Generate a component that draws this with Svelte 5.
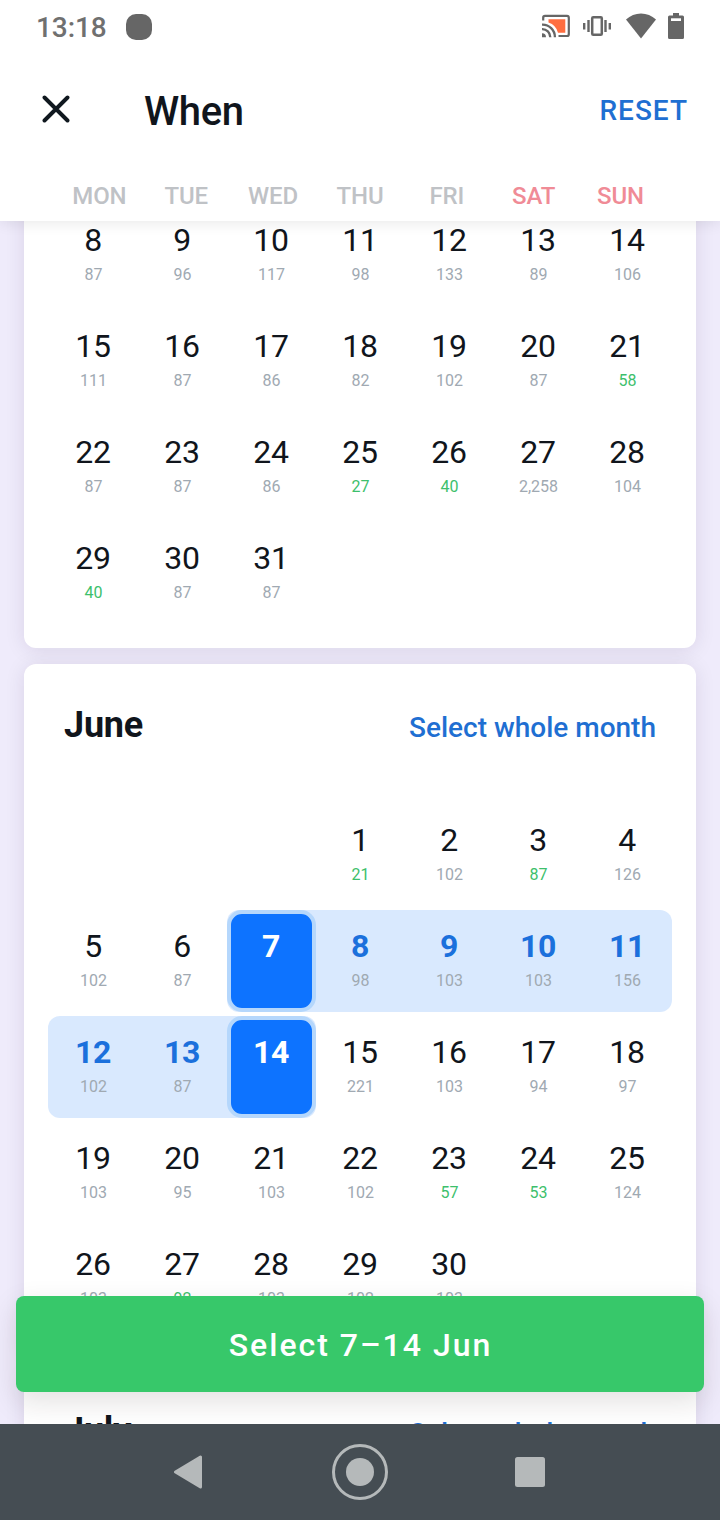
<script>
const weekdays = ['MON', 'TUE', 'WED', 'THU', 'FRI', 'SAT', 'SUN'];

// [day, price, is it cheap]
const mayDays = [
  [8, '87'], [9, '96'], [10, '117'], [11, '98'], [12, '133'], [13, '89'], [14, '106'],
  [15, '111'], [16, '87'], [17, '86'], [18, '82'], [19, '102'], [20, '87'], [21, '58', true],
  [22, '87'], [23, '87'], [24, '86'], [25, '27', true], [26, '40', true], [27, '2,258'], [28, '104'],
  [29, '40', true], [30, '87'], [31, '87'],
];

const juneDays = [
  [1, '21', true], [2, '102'], [3, '87', true], [4, '126'],
  [5, '102'], [6, '87'], [7, ''], [8, '98'], [9, '103'], [10, '103'], [11, '156'],
  [12, '102'], [13, '87'], [14, ''], [15, '221'], [16, '103'], [17, '94'], [18, '97'],
  [19, '103'], [20, '95'], [21, '103'], [22, '102'], [23, '57', true], [24, '53', true], [25, '124'],
  [26, '103'], [27, '92', true], [28, '103'], [29, '102'], [30, '103'],
];

const months = [
  { name: 'May', header: false, offset: 0, days: mayDays },
  { name: 'June', header: true, offset: 3, days: juneDays },
  { name: 'July', header: true, offset: 0, days: [] },
];

let from = $state(7);
let to = $state(14);

function inRange(month, day) {
  return month.name === 'June' && from !== null && day >= from && day <= to;
}

function isEdge(month, day) {
  return month.name === 'June' && (day === from || day === to);
}

function reset() {
  from = null;
  to = null;
}

function pick(month, day) {
  if (month.name !== 'June') return;
  if (from === null || from !== to) {
    from = day;
    to = day;
  } else if (day < from) {
    from = day;
  } else {
    to = day;
  }
}
</script>


<div class="screen">
  <header>
    <!-- --- Status bar --- -->
    <div class="status">
      <span class="clock">13:18</span>
      <span class="notification"></span>
      <div class="status-icons">
        <svg class="cast" viewBox="0 0 28 24" width="28" height="24">
          <path d="M6.500 5.300H23.300V18.700H16Q14 11 6.500 8.500Z" fill="#ff6e40" />
          <path d="M1.200 6.500V3.400Q1.200 1.900 3 1.900H25Q26.800 1.900 26.800 3.700V20.200Q26.800 22 25 22H16.500" fill="none" stroke="#666" stroke-width="2.200" />
          <path d="M0 10.600A12.400 12.400 0 0 1 12.900 23.200M0 15.200A8 8 0 0 1 8.300 23.200" fill="none" stroke="#666" stroke-width="2.300" />
          <path d="M0 19.200A4 4 0 0 1 4 23.200H0Z" fill="#666" />
        </svg>
        <svg class="vibrate" viewBox="0 0 28 22" width="28" height="22">
          <rect x="9.200" y="2.200" width="9.600" height="17.600" rx="1" fill="none" stroke="#666" stroke-width="2.500" />
          <path d="M5.500 5V17M22.500 5V17M1.200 8V14.500M26.800 8V14.500" stroke="#666" stroke-width="2.400" />
        </svg>
        <svg class="wifi" viewBox="0 0 30 26" width="30" height="26">
          <path d="M0 6.500Q6.500 .5 15 .5T30 6.500L15 25.500Z" fill="#666" />
        </svg>
        <svg class="battery" viewBox="0 0 16 26" width="16" height="26">
          <path d="M5 0H11V2.600H14.500Q16 2.600 16 4.100V24.500Q16 26 14.500 26H1.500Q0 26 0 24.500V4.100Q0 2.600 1.500 2.600H5Z" fill="#666" />
          <path d="M3 5.300H13V8H3Z" fill="#fff" />
        </svg>
      </div>
    </div>

    <div class="toolbar">
      <button class="close" aria-label="Close">
        <svg viewBox="0 0 28 28" width="28" height="28">
          <path d="M2.500 2.500L25.500 25.500M25.500 2.500L2.500 25.500" stroke="#10181f" stroke-width="3.900" stroke-linecap="round" />
        </svg>
      </button>
      <h1>When</h1>
      <button class="reset" onclick={reset}>RESET</button>
    </div>

    <div class="weekdays">
      {#each weekdays as name, i}
        <span class:weekend={i > 4}>{name}</span>
      {/each}
    </div>
  </header>

  <!-- --- Months --- -->
  <main>
    {#each months as month}
      <section class="month" class:scrolled={!month.header}>
        {#if month.header}
          <div class="month-header">
            <h2>{month.name}</h2>
            <button class="whole">Select whole month</button>
          </div>
        {/if}
        <div class="days">
          {#each Array(month.offset) as _}
            <span></span>
          {/each}
          {#each month.days as [day, price, cheap], i}
            <button
              class="day"
              class:range={inRange(month, day)}
              class:edge={isEdge(month, day)}
              class:round-left={day === from || (i + month.offset) % 7 === 0}
              class:round-right={day === to || (i + month.offset) % 7 === 6}
              onclick={() => pick(month, day)}
            >
              <span class="number">{day}</span>
              <span class="price" class:cheap>{price}</span>
            </button>
          {/each}
        </div>
      </section>
    {/each}
  </main>

  <button class="submit">Select {from}–{to} Jun</button>

  <!-- --- System navigation --- -->
  <nav>
    <svg viewBox="0 0 28 34" width="28" height="34">
      <path d="M26.500 2V32L1.500 17Z" fill="#b5b9ba" stroke="#b5b9ba" stroke-width="3" stroke-linejoin="round" />
    </svg>
    <svg class="home" viewBox="0 0 56 56" width="56" height="56">
      <circle cx="28" cy="28" r="26.500" fill="none" stroke="#b5b9ba" stroke-width="3" />
      <circle cx="28" cy="28" r="14" fill="#b5b9ba" />
    </svg>
    <svg viewBox="0 0 30 30" width="30" height="30">
      <rect width="30" height="30" rx="2.500" fill="#b5b9ba" />
    </svg>
  </nav>
</div>


<style>
  :global(body) {
    margin: 0;
  }

  .screen {
    position: relative;
    display: flex;
    flex-direction: column;
    width: 720px;
    height: 1520px;
    overflow: hidden;
    background: #efebfb;
    color: #10151c;
    font-family: Roboto, "Liberation Sans", sans-serif;
  }

  button {
    margin: 0;
    padding: 0;
    border: 0;
    background: none;
    color: inherit;
    font: inherit;
    cursor: pointer;
  }

  svg {
    display: block;
    flex: none;
  }

  header {
    z-index: 2;
    flex: none;
    display: flex;
    flex-direction: column;
    box-sizing: border-box;
    height: 221px;
    background: #fff;
    box-shadow: 0 2px 14px rgba(0, 0, 0, 0.09);
  }

  .status {
    display: flex;
    align-items: center;
    height: 54px;
    padding: 0 36px;
  }

  .clock {
    margin-top: 1px;
    color: #707070;
    font-size: 28px;
    font-weight: 500;
    letter-spacing: -0.1px;
    line-height: 54px;
  }

  .notification {
    width: 26px;
    height: 26px;
    margin-left: 19px;
    border-radius: 10px;
    background: #666;
  }

  .status-icons {
    display: flex;
    align-items: center;
    margin: -2px 0 0 auto;
  }

  .vibrate {
    margin-left: 13px;
  }

  .wifi {
    margin-left: 15px;
  }

  .battery {
    margin-left: 12px;
  }

  .toolbar {
    display: flex;
    align-items: center;
    height: 112px;
    padding: 0 32px 0 42px;
  }

  .close {
    margin-top: -2px;
  }

  h1 {
    margin: 3px 0 0 74px;
    font-size: 40px;
    font-weight: 500;
    letter-spacing: -0.4px;
    line-height: 48px;
  }

  .reset {
    margin-left: auto;
    color: #1f6fd2;
    font-size: 28px;
    font-weight: 500;
    letter-spacing: 1px;
  }

  .weekdays {
    display: grid;
    grid-template-columns: repeat(7, 1fr);
    padding: 16px 56px 0;
    color: #bfc2c6;
    font-size: 24px;
    font-weight: 500;
    letter-spacing: -0.1px;
    line-height: 28px;
    text-align: center;
  }

  .weekend {
    color: #f08b96;
  }

  main {
    flex: 1;
    min-height: 0;
    display: flex;
    flex-direction: column;
    gap: 16px;
    padding: 0 24px;
    overflow: hidden;
  }

  .month {
    flex: none;
    padding: 24px;
    border-radius: 12px;
    background: #fff;
    box-shadow: 0 2px 20px rgba(40, 20, 60, 0.1);
  }

  .scrolled {
    margin-top: -41px;
  }

  .month-header {
    display: flex;
    align-items: baseline;
    justify-content: space-between;
    height: 100px;
    margin-bottom: 16px;
    padding: 0 16px;
  }

  h2 {
    margin: 0;
    padding-top: 16px;
    font-size: 36px;
    font-weight: 700;
    letter-spacing: -0.2px;
    line-height: 42px;
  }

  .whole {
    color: #1f6fd2;
    font-size: 28px;
    font-weight: 500;
  }

  .days {
    display: grid;
    grid-template-columns: repeat(7, 89px);
    grid-auto-rows: 102px;
    row-gap: 4px;
    padding-left: 1px;
  }

  .day {
    position: relative;
    z-index: 0;
    display: flex;
    flex-direction: column;
    align-items: center;
    padding-top: 17px;
  }

  .number {
    padding-right: 1px;
    font-size: 32px;
    letter-spacing: -0.3px;
    line-height: 38px;
  }

  .price {
    margin-top: 6px;
    color: #a0a9b2;
    font-size: 16px;
    line-height: 20px;
  }

  .cheap {
    color: #3dbf6c;
  }

  .range {
    background: #d9e9fe;
    color: #1b70dc;
  }

  .range .number {
    font-weight: 700;
  }

  .range.round-left {
    border-radius: 12px 0 0 12px;
  }

  .range.round-right {
    border-radius: 0 12px 12px 0;
  }

  /* the first column reaches one pixel further out */
  .range.round-left:not(.edge) {
    margin-left: -1px;
    padding-left: 1px;
  }

  .edge {
    color: #fff;
  }

  .edge::before {
    content: '';
    position: absolute;
    z-index: -1;
    inset: 0;
    border: 4px solid #b5d7fc;
    border-radius: 15px;
    background: #0d73ff;
  }

  .submit {
    position: absolute;
    z-index: 1;
    left: 16px;
    right: 16px;
    bottom: 128px;
    height: 96px;
    padding: 2px 0 0 1px;
    border-radius: 8px;
    background: #37c86a;
    box-shadow: 0 10px 28px rgba(40, 20, 20, 0.13);
    color: #fff;
    font-size: 32px;
    font-weight: 500;
    letter-spacing: 2px;
  }

  nav {
    z-index: 2;
    flex: none;
    display: flex;
    align-items: center;
    justify-content: space-between;
    box-sizing: border-box;
    height: 96px;
    padding: 0 175px 0 174px;
    background: #454d53;
  }

  .home {
    margin: 0 -1px 0 1px;
  }
</style>
